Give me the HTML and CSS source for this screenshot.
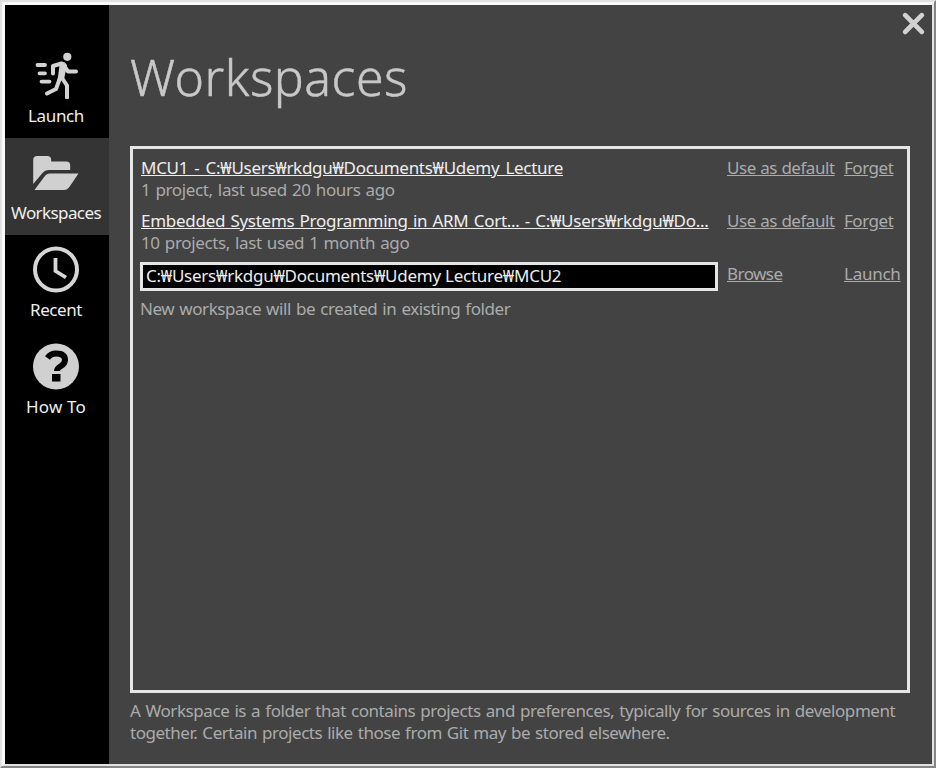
FILE: index.html
```html
<!DOCTYPE html>
<html lang="en">
<head>
<meta charset="utf-8">
<title>Workspaces</title>
<link rel="stylesheet" href="styles.css">
</head>
<body>
<div class="window">
  <nav class="sidebar">
    <a class="nav-item">
      <svg class="nav-icon" viewBox="0 0 48 48"><circle cx="35.300" cy="5.800" r="4.100" fill="#d2d2d2"/><path d="M21 22.500v-7.500l8.500-2.500M31.500 13.500l4.500 7h8M30 27l5 7.500v12M28 27l-4 11-9 4.500" fill="none" stroke="#d2d2d2" stroke-width="4" stroke-linejoin="round" stroke-linecap="round"/><path d="M28 10.700l4.500.6 2.500 2.700-3 14.500-6.500 1z" fill="#d2d2d2"/><path d="M5.500 14h7.500M7.500 22.300h5.500M9.500 30.600h8" stroke="#d2d2d2" stroke-width="3.800" stroke-linecap="round"/></svg>
      <span class="launch">Launch</span>
    </a>
    <a class="nav-item active">
      <svg class="nav-icon" viewBox="0 0 48 48"><path d="M1.200 36V12q0-4 4-4h10q4 0 4 4v1.500h15q4 0 4 4v4.500H17q-4 0-6.500 3z" fill="#d0d0d0"/><path d="M2.500 42L12.500 28.500q2-3 5.500-3h28.500L37 39.500q-2 2.500-5 2.500z" fill="#d0d0d0"/></svg>
      <span class="workspaces">Workspaces</span>
    </a>
    <a class="nav-item">
      <svg class="nav-icon" viewBox="0 0 48 48"><circle cx="24" cy="24.500" r="21" fill="none" stroke="#d6d6d6" stroke-width="4"/><path d="M23.500 13v13l10.500 6.500" fill="none" stroke="#d6d6d6" stroke-width="3.800"/></svg>
      <span class="recent">Recent</span>
    </a>
    <a class="nav-item">
      <svg class="nav-icon" viewBox="0 0 48 48"><circle cx="24" cy="24.500" r="23" fill="#d0d0d0"/><path d="M15.500 16q3-4.500 8.500-4.500 9 0 9 6.500 0 3.500-4 6-4 2.300-4 5" fill="none" stroke="#000" stroke-width="6"/><path d="M20 32h8.500v7.500H20z"/></svg>
      <span class="howto">How To</span>
    </a>
  </nav>
  <main class="content">
    <h1>Workspaces</h1>
    <section class="panel">
      <div class="row">
        <div class="info"><a class="link">MCU1 - C:₩Users₩rkdgu₩Documents₩Udemy Lecture</a><p class="meta">1 project, last used 20 hours ago</p></div>
        <a class="action">Use as default</a><a class="action">Forget</a>
      </div>
      <div class="row">
        <div class="info"><a class="link long">Embedded Systems Programming in ARM Cort... - C:₩Users₩rkdgu₩Do...</a><p class="meta">10 projects, last used 1 month ago</p></div>
        <a class="action">Use as default</a><a class="action">Forget</a>
      </div>
      <div class="row create">
        <div class="field">C:₩Users₩rkdgu₩Documents₩Udemy Lecture₩MCU2</div>
        <a class="action browse">Browse</a><a class="action go">Launch</a>
      </div>
      <p class="hint">New workspace will be created in existing folder</p>
    </section>
    <footer>A Workspace is a folder that contains projects and preferences, typically for sources in development<br><span class="last">together. Certain projects like those from Git may be stored elsewhere.</span></footer>
  </main>
  <svg class="close" viewBox="0 0 24 24"><path d="M4 4l16 16M20 4L4 20" stroke="#d2d2d2" stroke-width="4.600" stroke-linecap="round"/></svg>
</div>
</body>
</html>
```
FILE: styles.css
```css
* { box-sizing: border-box; }
body { margin: 0; width: 936px; height: 768px; border: 2px solid; border-color: #e2e2e2 #858585 #858585 #e2e2e2; font-family: "Noto Sans", sans-serif; font-size: 17px; color: #ababab; }
h1, p { margin: 0; font-weight: 400; }
.window { position: relative; display: flex; width: 932px; height: 764px; background: #434343; border: 3px solid; border-color: #fafafa #e2e2e2 #e2e2e2 #fafafa; border-right-width: 2px; border-bottom-width: 2px; }
.sidebar { flex: 0 0 104px; padding-top: 36px; background: #000; }
.nav-item { display: flex; flex-direction: column; align-items: center; height: 97px; padding-top: 10px; padding-right: 2px; color: #eee; line-height: 24px; white-space: nowrap; }
.active { background: #343434; }
.nav-icon { width: 48px; height: 48px; margin-bottom: 5px; }
.launch { letter-spacing: -0.35px; }
.workspaces { letter-spacing: -0.6px; }
.recent { letter-spacing: -0.45px; }
.howto { letter-spacing: 0.15px; }
.content { flex: 1; min-width: 0; padding: 43px 22px 0 21px; }
h1 { height: 98px; font-size: 50px; font-weight: 300; line-height: 58px; color: #c8c8c8; white-space: nowrap; letter-spacing: 0.5px; -webkit-text-stroke: 0.5px #c8c8c8; }
.panel { height: 547px; border: 3px solid #e6e6e6; padding: 8px; }
.row { display: grid; grid-template-columns: 586px 117px 60px; height: 53px; line-height: 22px; white-space: nowrap; justify-items: start; align-items: start; }
.link { color: #eee; text-decoration: underline; letter-spacing: -0.29px; word-spacing: 2px; }
.long { letter-spacing: -0.264px; word-spacing: 1px; }
.meta { letter-spacing: -0.36px; word-spacing: 1px; line-height: 22px; }
.action { text-decoration: underline; letter-spacing: -0.47px; word-spacing: 0.5px; }
.browse { letter-spacing: -0.55px; }
.go { letter-spacing: -0.27px; }
.create { height: 35px; }
.field { width: 578px; height: 29px; margin-top: -1px; margin-left: -1px; padding-left: 3px; border: 3px solid #e6e6e6; background: #000; color: #eee; letter-spacing: -0.25px; }
.hint { margin-left: -1px; letter-spacing: -0.42px; word-spacing: 1px; line-height: 22px; }
footer { padding-top: 7px; line-height: 21.500px; white-space: nowrap; letter-spacing: -0.42px; word-spacing: 1px; }
.last { letter-spacing: -0.46px; }
.close { position: absolute; right: 6px; top: 6px; width: 25px; height: 25px; }
```
